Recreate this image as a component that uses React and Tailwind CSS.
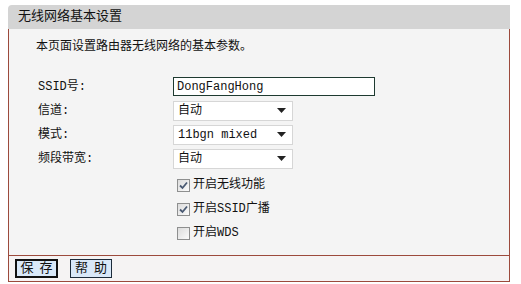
export default function App() {
  const font = { fontFamily: '"Liberation Mono", "Noto Sans CJK SC", monospace' };
  const Select = ({ value }) => (
    <div className="flex h-[20px] w-[120px] items-center justify-between border border-[#d6d6d6] bg-white pl-[4px] pr-[6px] text-[12px] text-[#111]">
      <span>{value}</span>
      <svg width="9" height="5" viewBox="0 0 9 5"><path d="M0 0H9L4.5 5Z" fill="#222" /></svg>
    </div>
  );
  const Check = ({ checked, label }) => (
    <div className="flex h-[24px] items-center">
      <div className="mr-[3px] flex h-[13px] w-[13px] items-center justify-center border border-[#8e8f8f] bg-gradient-to-br from-[#dcdcdc] to-[#fbfbfb]">
        {checked && (
          <svg width="9" height="9" viewBox="0 0 9 9"><path d="M1 4.5L3.5 7L8 1.5" stroke="#4a5a73" strokeWidth="1.8" fill="none" /></svg>
        )}
      </div>
      <span className="text-[12px] text-[#111]">{label}</span>
    </div>
  );
  return (
    <div className="h-[284px] w-[521px] bg-white" style={font}>
      <div className="ml-[8px] w-[502px] pt-[5px]">
        <div className="flex h-[24px] items-center rounded-tl-[4px] bg-[#d4d4d4] pl-[10px] text-[13px] text-[#111]">
          无线网络基本设置
        </div>
        <div className="h-[227px] border-x border-b border-[#9c4a3c] bg-[#f4f4f4]">
          <div className="pl-[27px] pt-[10px] text-[12px] leading-[16px] text-[#111]">
            本页面设置路由器无线网络的基本参数。
          </div>
          <div className="mt-[21px] flex flex-col gap-[3px] pl-[29px]">
            <div className="flex h-[21px] items-center">
              <span className="w-[135px] text-[12px] text-[#111]">SSID号:</span>
              <div className="flex h-[19px] w-[202px] items-center border border-[#1e3a30] bg-white pl-[3px] text-[12px] text-[#111]">
                DongFangHong
              </div>
            </div>
            <div className="flex h-[21px] items-center">
              <span className="w-[135px] text-[12px] text-[#111]">信道:</span>
              <Select value="自动" />
            </div>
            <div className="flex h-[21px] items-center">
              <span className="w-[135px] text-[12px] text-[#111]">模式:</span>
              <Select value="11bgn mixed" />
            </div>
            <div className="flex h-[21px] items-center">
              <span className="w-[135px] text-[12px] text-[#111]">频段带宽:</span>
              <Select value="自动" />
            </div>
          </div>
          <div className="mt-[4px] flex flex-col pl-[168px]">
            <Check checked label="开启无线功能" />
            <Check checked label="开启SSID广播" />
            <Check label="开启WDS" />
          </div>
        </div>
        <div className="flex h-[26px] items-center gap-[12px] border-x border-b border-[#9c4a3c] bg-[#f5f3f3] pl-[6px]">
          <div className="flex h-[19px] w-[43px] items-center justify-center gap-[6px] border-2 border-[#111] bg-[#d9e8f8] text-[13px] text-[#111]">
            <span>保</span><span>存</span>
          </div>
          <div className="flex h-[19px] w-[42px] items-center justify-center gap-[6px] border border-[#1c2b3a] bg-[#d9e8f8] text-[13px] text-[#111]">
            <span>帮</span><span>助</span>
          </div>
        </div>
      </div>
    </div>
  );
}
